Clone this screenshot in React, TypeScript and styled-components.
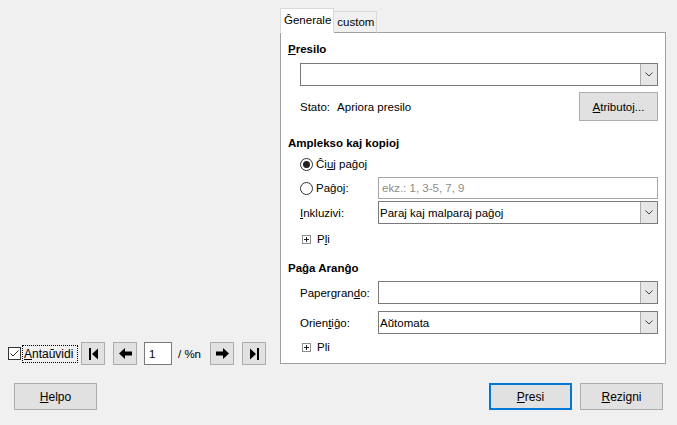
import React from 'react';
import styled, { createGlobalStyle } from 'styled-components';

const GlobalStyle = createGlobalStyle`
  html, body { margin: 0; padding: 0; background: #f0f0f0; }
  body {
    font-family: "Liberation Sans", Arial, sans-serif;
    font-size: 11.5px;
    color: #000;
  }
  * { box-sizing: border-box; }
`;

const Dialog = styled.div`
  width: 677px;
  height: 425px;
  display: flex;
  flex-direction: column;
  background: #f0f0f0;
`;

const Main = styled.div`
  display: flex;
  height: 365px;
  padding: 8px 11px 0 8px;
`;

const PreviewPane = styled.div`
  flex: 1;
  display: flex;
  align-items: flex-end;
`;

const NavBar = styled.div`
  display: flex;
  align-items: center;
  height: 23px;
`;

const CheckBox = styled.span`
  width: 13px;
  height: 13px;
  border: 1px solid #333;
  background: #fff;
  display: flex;
  align-items: center;
  justify-content: center;
  flex-shrink: 0;
`;

const FocusLabel = styled.span`
  margin-left: 1px;
  width: 56px;
  height: 18px;
  padding: 0 1px;
  border: 1px dotted #000;
  display: flex;
  align-items: center;
  font-size: 12px;
`;

const NavButton = styled.button<{ $ml: number }>`
  margin-left: ${p => p.$ml}px;
  width: 24px;
  height: 23px;
  padding: 0;
  background: #e1e1e1;
  border: 1px solid #adadad;
  display: flex;
  align-items: center;
  justify-content: center;
`;

const PageInput = styled.input`
  margin-left: 7px;
  width: 28px;
  height: 23px;
  border: 1px solid #7a7a7a;
  background: #fff;
  font: inherit;
  padding: 0 4px;
  color: #000;
  outline: none;
`;

const PageCount = styled.span`
  margin-left: 6px;
  width: 25px;
`;

const TabsColumn = styled.div`
  width: 386px;
  display: flex;
  flex-direction: column;
  padding-bottom: 1px;
`;

const TabStrip = styled.div`
  display: flex;
  align-items: flex-end;
  height: 25px;
  margin-bottom: -1px;
  position: relative;
  z-index: 1;
`;

const Tab = styled.div<{ $active?: boolean }>`
  height: ${p => (p.$active ? 25 : 22)}px;
  padding: 0 2px 1px 3px;
  border: 1px solid #d9d9d9;
  border-bottom: ${p => (p.$active ? '1px solid #fff' : '1px solid #a0a0a0')};
  border-left: ${p => (p.$active ? '1px solid #d9d9d9' : 'none')};
  background: ${p => (p.$active ? '#fff' : '#f0f0f0')};
  display: flex;
  align-items: center;
`;

const Panel = styled.div`
  flex: 1;
  background: #fff;
  border: 1px solid #a0a0a0;
  padding: 8px 7px 0 7px;
  display: flex;
  flex-direction: column;
`;

const SectionTitle = styled.div<{ $mt?: number }>`
  margin-top: ${p => p.$mt ?? 0}px;
  height: 16px;
  line-height: 16px;
  font-weight: bold;
`;

const Row = styled.div<{ $mt: number; $h?: number }>`
  margin-top: ${p => p.$mt}px;
  height: ${p => p.$h ?? 23}px;
  padding-left: 12px;
  display: flex;
  align-items: center;
`;

const FieldLabel = styled.span`
  width: 78px;
  flex-shrink: 0;
  display: flex;
  align-items: center;
`;

const Combo = styled.div`
  flex: 1;
  height: 100%;
  border: 1px solid #7a7a7a;
  background: #fff;
  display: flex;
  align-items: stretch;
`;

const ComboText = styled.span`
  flex: 1;
  display: flex;
  align-items: center;
  padding-left: 1px;
`;

const DropButton = styled.span`
  width: 17px;
  background: #e6e6e6;
  border-left: 1px solid #adadad;
  display: flex;
  align-items: center;
  justify-content: center;
`;

const TextInput = styled.input`
  flex: 1;
  height: 100%;
  border: 1px solid #a5a5a5;
  background: #fff;
  font: inherit;
  padding: 0 3px;
  outline: none;
  &::placeholder { color: #8c8c8c; }
`;

const StatusValue = styled.span`
  margin-left: 7px;
`;

const SmallButton = styled.button`
  margin-left: auto;
  width: 79px;
  height: 29px;
  padding: 0;
  font: inherit;
  color: #000;
  background: #e1e1e1;
  border: 1px solid #adadad;
`;

const RadioLabel = styled.span`
  display: flex;
  align-items: center;
  gap: 3px;
`;

const MoreToggle = styled.div<{ $mt: number }>`
  margin-top: ${p => p.$mt}px;
  height: 16px;
  padding-left: 14px;
  display: flex;
  align-items: center;
  gap: 6px;
`;

const Footer = styled.div`
  display: flex;
  align-items: center;
  padding: 18px 14px 0 14px;
  gap: 8px;
`;

const Spacer = styled.div`
  flex: 1;
`;

const PushButton = styled.button<{ $default?: boolean }>`
  width: 83px;
  height: 27px;
  padding: 0;
  font: inherit;
  font-size: 12px;
  color: #000;
  background: #e1e1e1;
  border: ${p => (p.$default ? '2px solid #0078d7' : '1px solid #adadad')};
`;

const Mn = styled.span`
  text-decoration: underline;
  text-underline-offset: 1px;
`;

const Chevron = () => (
  <svg width="8" height="5" viewBox="0 0 8 5">
    <polyline points="0.5,0.5 4,4 7.5,0.5" fill="none" stroke="#444" strokeWidth="1" />
  </svg>
);

const Radio = ({ checked }: { checked?: boolean }) => (
  <svg width="13" height="13" viewBox="0 0 13 13">
    <circle cx="6.5" cy="6.5" r="6" fill="#fff" stroke="#333" strokeWidth="1" />
    {checked && <circle cx="6.5" cy="6.5" r="3.5" fill="#222" />}
  </svg>
);

const PlusBox = () => (
  <svg width="9" height="9" viewBox="0 0 9 9">
    <rect x="0.5" y="0.5" width="8" height="8" fill="#fff" stroke="#8c8c8c" />
    <line x1="2" y1="4.5" x2="7" y2="4.5" stroke="#222" />
    <line x1="4.5" y1="2" x2="4.5" y2="7" stroke="#222" />
  </svg>
);

const CheckMark = () => (
  <svg width="11" height="11" viewBox="0 0 11 11">
    <polyline points="1.5,5.5 4,8 9.5,2.5" fill="none" stroke="#333" strokeWidth="1" />
  </svg>
);

const FirstIcon = () => (
  <svg width="9" height="12" viewBox="0 0 9 12">
    <rect x="0" y="0" width="2" height="12" fill="#000" />
    <polygon points="9,0.5 3,6 9,11.5" fill="#000" />
  </svg>
);

const LastIcon = () => (
  <svg width="9" height="12" viewBox="0 0 9 12">
    <rect x="7" y="0" width="2" height="12" fill="#000" />
    <polygon points="0,0.5 6,6 0,11.5" fill="#000" />
  </svg>
);

const PrevIcon = () => (
  <svg width="13" height="11" viewBox="0 0 13 11">
    <polygon points="0,5.5 6,0 6,3.5 13,3.5 13,7.5 6,7.5 6,11" fill="#000" />
  </svg>
);

const NextIcon = () => (
  <svg width="13" height="11" viewBox="0 0 13 11">
    <polygon points="13,5.5 7,0 7,3.5 0,3.5 0,7.5 7,7.5 7,11" fill="#000" />
  </svg>
);

const ComboBox = ({ value }: { value?: string }) => (
  <Combo>
    <ComboText>{value}</ComboText>
    <DropButton>
      <Chevron />
    </DropButton>
  </Combo>
);

export default function App() {
  return (
    <>
      <GlobalStyle />
      <Dialog>
        <Main>
          <PreviewPane>
            <NavBar>
              <CheckBox>
                <CheckMark />
              </CheckBox>
              <FocusLabel>
                <Mn>A</Mn>ntaŭvidi
              </FocusLabel>
              <NavButton $ml={3}>
                <FirstIcon />
              </NavButton>
              <NavButton $ml={8}>
                <PrevIcon />
              </NavButton>
              <PageInput value="1" readOnly />
              <PageCount>/ %n</PageCount>
              <NavButton $ml={7}>
                <NextIcon />
              </NavButton>
              <NavButton $ml={8}>
                <LastIcon />
              </NavButton>
            </NavBar>
          </PreviewPane>
          <TabsColumn>
            <TabStrip>
              <Tab $active>Ĝenerale</Tab>
              <Tab>custom</Tab>
            </TabStrip>
            <Panel>
              <SectionTitle>
                <Mn>P</Mn>resilo
              </SectionTitle>
              <Row $mt={6}>
                <ComboBox />
              </Row>
              <Row $mt={6} $h={29}>
                <span>Stato:</span>
                <StatusValue>Apriora presilo</StatusValue>
                <SmallButton>
                  <Mn>A</Mn>tributoj...
                </SmallButton>
              </Row>
              <SectionTitle $mt={14}>Amplekso kaj kopioj</SectionTitle>
              <Row $mt={5} $h={16}>
                <RadioLabel>
                  <Radio checked />
                  <span>
                    Ĉi<Mn>u</Mn>j paĝoj
                  </span>
                </RadioLabel>
              </Row>
              <Row $mt={5} $h={22}>
                <FieldLabel>
                  <RadioLabel>
                    <Radio />
                    <span>
                      Paĝo<Mn>j</Mn>:
                    </span>
                  </RadioLabel>
                </FieldLabel>
                <TextInput placeholder="ekz.: 1, 3-5, 7, 9" readOnly />
              </Row>
              <Row $mt={2}>
                <FieldLabel>
                  <span>
                    <Mn>I</Mn>nkluzivi:
                  </span>
                </FieldLabel>
                <ComboBox value="Paraj kaj malparaj paĝoj" />
              </Row>
              <MoreToggle $mt={7}>
                <PlusBox />
                <span>
                  P<Mn>l</Mn>i
                </span>
              </MoreToggle>
              <SectionTitle $mt={13}>Paĝa Aranĝo</SectionTitle>
              <Row $mt={5}>
                <FieldLabel>
                  <span>
                    Papergran<Mn>d</Mn>o:
                  </span>
                </FieldLabel>
                <ComboBox />
              </Row>
              <Row $mt={7}>
                <FieldLabel>
                  <span>
                    Orien<Mn>t</Mn>iĝo:
                  </span>
                </FieldLabel>
                <ComboBox value="Aŭtomata" />
              </Row>
              <MoreToggle $mt={5}>
                <PlusBox />
                <span>Pli</span>
              </MoreToggle>
            </Panel>
          </TabsColumn>
        </Main>
        <Footer>
          <PushButton>
            <Mn>H</Mn>elpo
          </PushButton>
          <Spacer />
          <PushButton $default>
            <Mn>P</Mn>resi
          </PushButton>
          <PushButton>
            <Mn>R</Mn>ezigni
          </PushButton>
        </Footer>
      </Dialog>
    </>
  );
}
